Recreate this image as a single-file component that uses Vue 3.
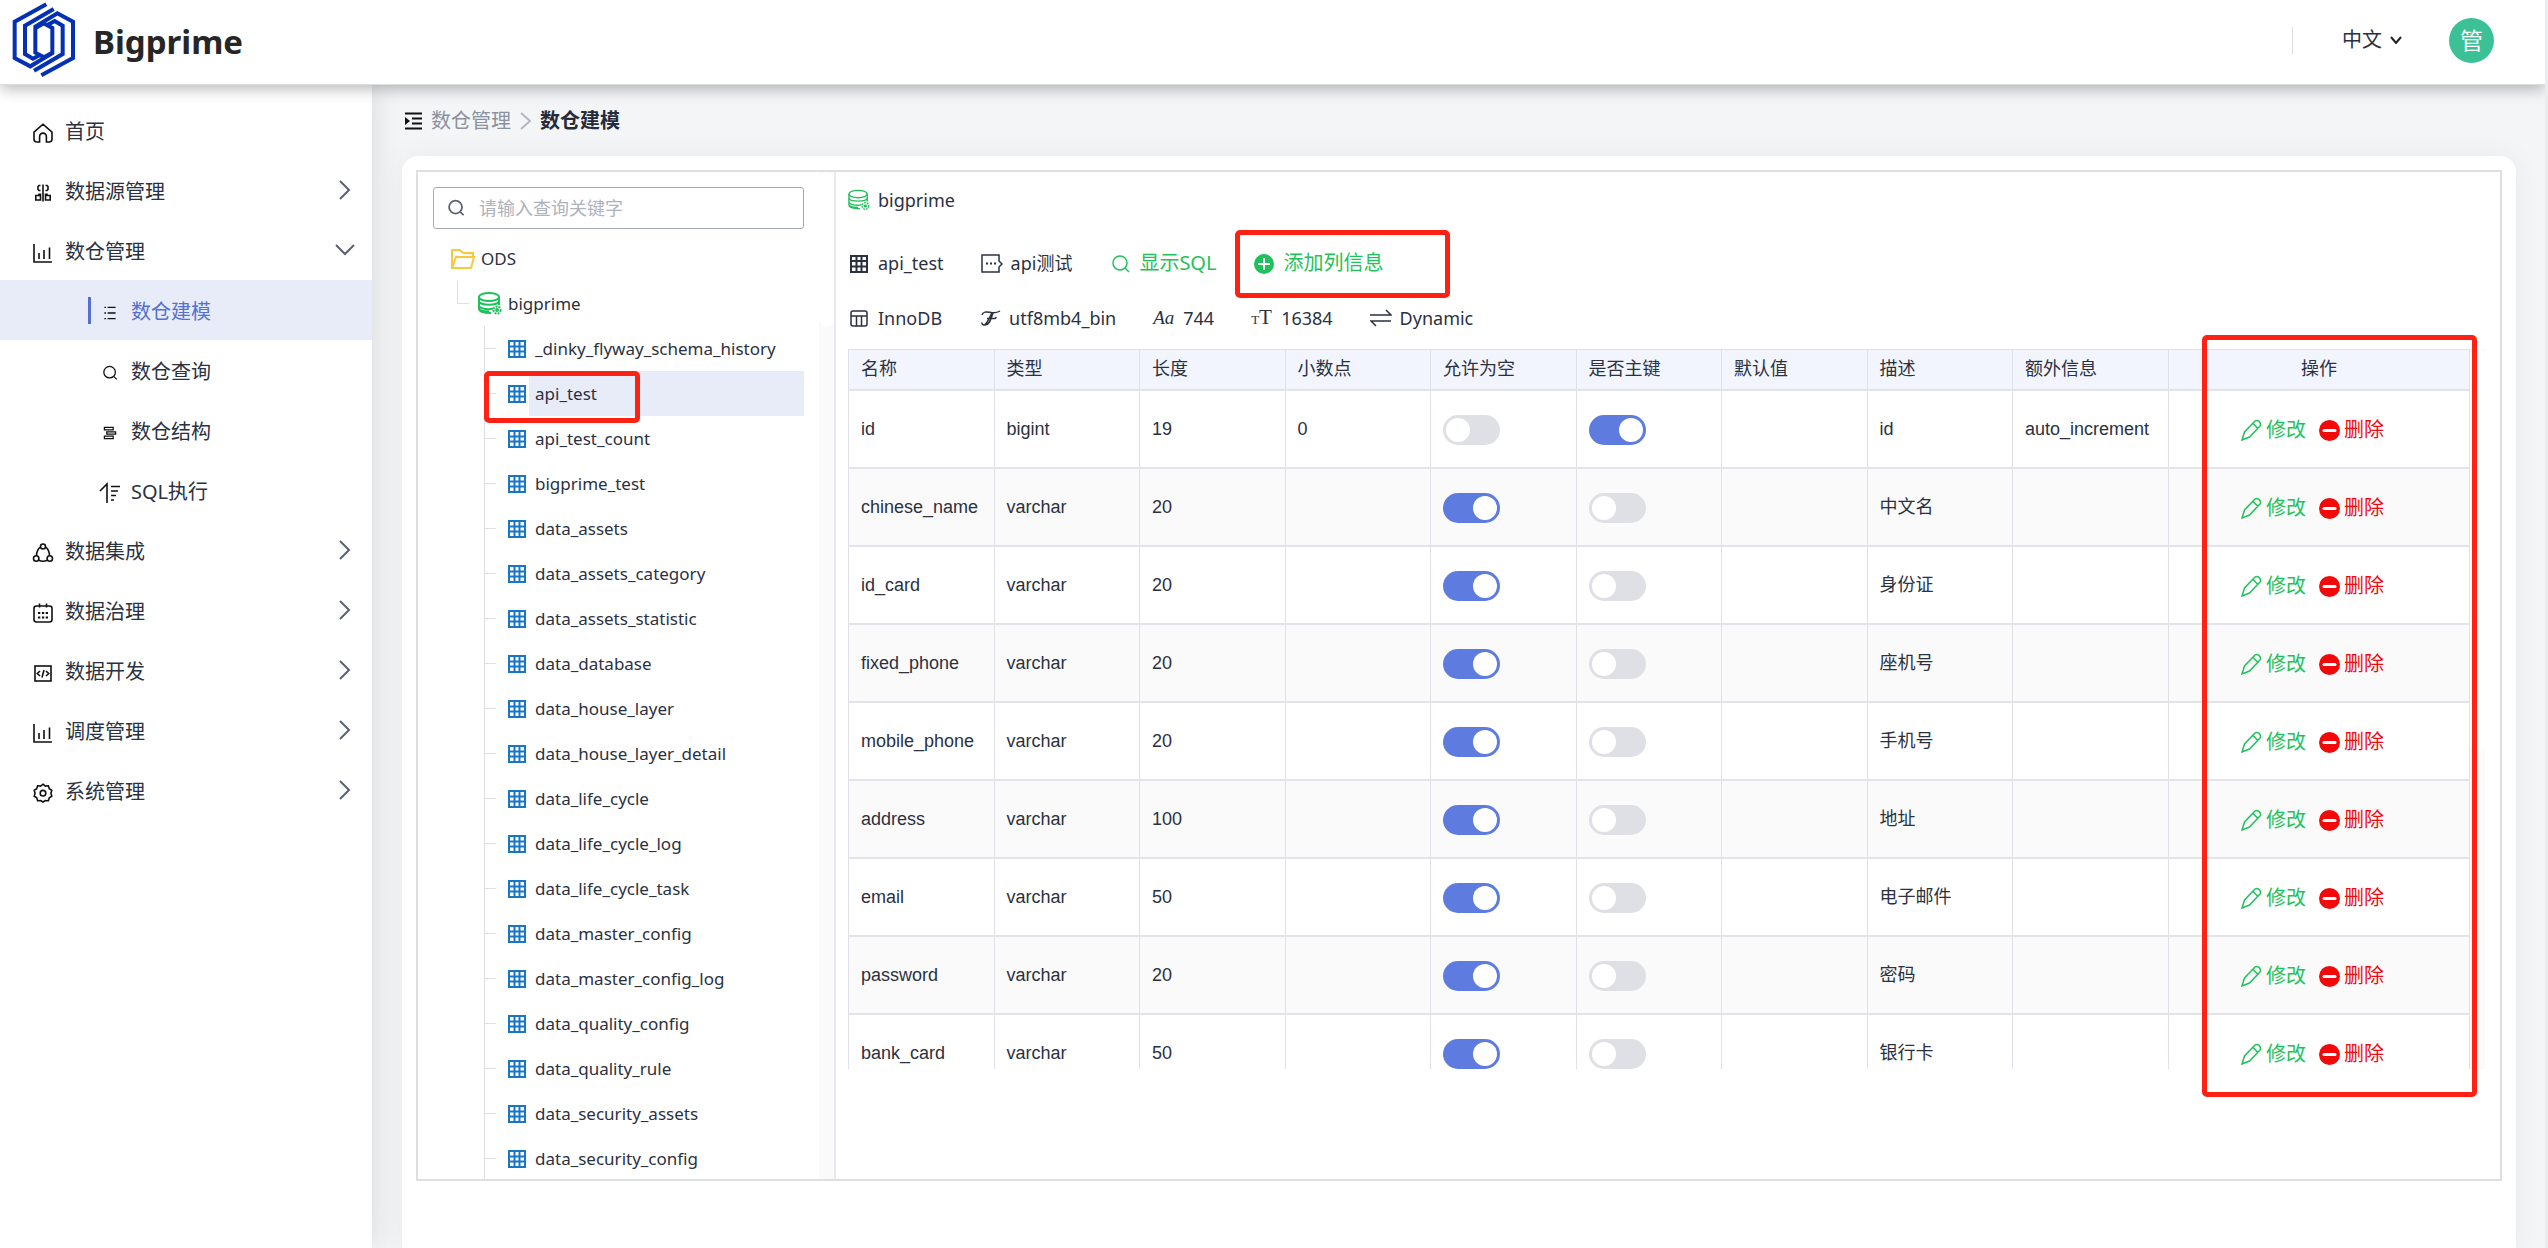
<script setup>
import { ref, reactive } from 'vue'

const keyword = ref('')

const menu = [
  { label: '首页', icon: 'home' },
  { label: '数据源管理', icon: 'source', arrow: 'right' },
  {
    label: '数仓管理', icon: 'chart', arrow: 'down',
    children: [
      { label: '数仓建模', icon: 'list', active: true },
      { label: '数仓查询', icon: 'search' },
      { label: '数仓结构', icon: 'layers' },
      { label: 'SQL执行', icon: 'sort' },
    ],
  },
  { label: '数据集成', icon: 'share', arrow: 'right' },
  { label: '数据治理', icon: 'calendar', arrow: 'right' },
  { label: '数据开发', icon: 'code', arrow: 'right' },
  { label: '调度管理', icon: 'chart', arrow: 'right' },
  { label: '系统管理', icon: 'gear', arrow: 'right' },
]

const tables = [
  '_dinky_flyway_schema_history', 'api_test', 'api_test_count', 'bigprime_test',
  'data_assets', 'data_assets_category', 'data_assets_statistic', 'data_database',
  'data_house_layer', 'data_house_layer_detail', 'data_life_cycle', 'data_life_cycle_log',
  'data_life_cycle_task', 'data_master_config', 'data_master_config_log',
  'data_quality_config', 'data_quality_rule', 'data_security_assets', 'data_security_config',
]
const current = 'api_test'

const heads = ['名称', '类型', '长度', '小数点', '允许为空', '是否主键', '默认值', '描述', '额外信息']

const columns = reactive([
  { name: 'id', type: 'bigint', len: 19, dec: '0', nullable: false, pk: true, desc: 'id', extra: 'auto_increment' },
  { name: 'chinese_name', type: 'varchar', len: 20, nullable: true, pk: false, desc: '中文名' },
  { name: 'id_card', type: 'varchar', len: 20, nullable: true, pk: false, desc: '身份证' },
  { name: 'fixed_phone', type: 'varchar', len: 20, nullable: true, pk: false, desc: '座机号' },
  { name: 'mobile_phone', type: 'varchar', len: 20, nullable: true, pk: false, desc: '手机号' },
  { name: 'address', type: 'varchar', len: 100, nullable: true, pk: false, desc: '地址' },
  { name: 'email', type: 'varchar', len: 50, nullable: true, pk: false, desc: '电子邮件' },
  { name: 'password', type: 'varchar', len: 20, nullable: true, pk: false, desc: '密码' },
  { name: 'bank_card', type: 'varchar', len: 50, nullable: true, pk: false, desc: '银行卡' },
])

const icons = {
  home: '<path d="M1 9.200 10 1.200l9 8V16a3 3 0 0 1-3 3h-2.600v-5.500a3.400 3.400 0 0 0-6.800 0V19H4a3 3 0 0 1-3-3z"/>',
  source: '<path d="M10 1.500v17M7.500 2.500H6L5 3.500v3l1 1h1.500M12.500 2.500H14l1 1v3l-1 1h-1.500M7.500 10.500V17H2.800v-4.500H6v-2M12.500 10.500V17h4.700v-4.500H14v-2"/>',
  chart: '<path d="M1 1v18h18M6 10v6M11 7v9M16.500 4.500V16"/>',
  list: '<path d="M3 3h2M7 3h10M3 10h2M7 10h10M3 17h2M7 17h10"/>',
  search: '<circle cx="9.500" cy="9" r="7.200"/><path d="M14.800 14.500 18.500 18"/>',
  layers: '<path d="M3 3h11v3H3zM6 8.500h11v3H6zM3 14h11v3H3z"/>',
  sort: '<path d="M0 8 7 1v19M11 3.500h9M11 8h7M11 12.500h5M11 17h3"/>',
  share: '<circle cx="10" cy="3.500" r="2.500"/><circle cx="3.200" cy="15.500" r="2.700"/><circle cx="16.800" cy="15.500" r="2.700"/><path d="M7.500 4.200C4.800 6 3.600 9 3.500 12.700M12.500 4.200c2.700 1.800 3.900 4.800 4 8.500M5.800 17.200c2.800 1.400 5.600 1.400 8.400 0"/>',
  calendar: '<rect x="1" y="3" width="18" height="16" rx="2.500"/><path d="M6.500.5v4M13.500.5v4"/><path d="M5 10h2.300M8.900 10h2.300M12.700 10H15M5 14.500h2.300M8.900 14.500h2.300M12.700 14.500H15" stroke-width="2.200"/>',
  code: '<rect x="2" y="3" width="16" height="15"/><path d="M7 8l-2.700 2.500L7 13M13 8l2.700 2.500L13 13M11 7l-2 7.500"/>',
  gear: '<path d="M10 1.200l2.400 1.900 3-.3.9 2.900 2.500 1.700-.9 2.800.9 2.900-2.500 1.700-.9 2.900-3-.2L10 19l-2.400-1.500-3 .2-.9-2.900-2.500-1.700.9-2.900-.9-2.800 2.500-1.700.9-2.900 3 .3z"/><circle cx="10" cy="10.200" r="2.800"/>',
}
</script>

<template>
  <div class="page">
    <header class="topbar">
      <a href="#" class="brand">
        <svg class="logo" viewBox="0 0 240 240" fill="none" stroke="#0431b4" stroke-width="12">
          <path d="M127 13 32 65v109l47 25 66-40V84l-26-14-24 14" />
          <path d="M112 226l95-52V65l-47-25-66 40v78l26 14 25-14" />
          <path d="M149 27 63 77v85l24 14 22-12" />
          <path d="M90 212l86-50V77l-24-14-22 12" />
        </svg>
        <span>Bigprime</span>
      </a>
      <div class="tools">
        <button type="button" class="lang">中文
          <svg width="12" height="8" viewBox="0 0 12 8" fill="none" stroke="#222" stroke-width="2"><path d="M1 1l5 6 5-6" /></svg>
        </button>
        <span class="avatar">管</span>
      </div>
    </header>

    <div class="body">
      <nav class="sidebar">
        <template v-for="item in menu" :key="item.label">
          <a href="#" class="nav-item">
            <svg class="nav-icon" viewBox="0 0 20 20" v-html="icons[item.icon]" />
            <span>{{ item.label }}</span>
            <svg v-if="item.arrow" class="nav-arrow" :class="item.arrow" viewBox="0 0 20 20"><path d="M5 1l9 9-9 9" /></svg>
          </a>
          <a v-for="sub in item.children" :key="sub.label" href="#" class="nav-item sub" :class="{ active: sub.active }">
            <i class="bar"></i>
            <svg class="nav-icon" :class="{ tall: sub.icon === 'sort' }" viewBox="0 0 20 20" v-html="icons[sub.icon]" />
            <span>{{ sub.label }}</span>
          </a>
        </template>
      </nav>

      <main class="main">
        <div class="crumbs">
          <svg width="17" height="18" viewBox="0 0 17 18" fill="none" stroke="#111" stroke-width="2">
            <path d="M0 1.500h17M7 6.500h10M7 11.500h10M0 16.500h17" /><path d="M0 5l5 4-5 4z" fill="#111" stroke="none" />
          </svg>
          <a href="#">数仓管理</a>
          <svg width="11" height="18" viewBox="0 0 11 18" fill="none" stroke="#b4b8c0" stroke-width="2"><path d="M1 1l9 8-9 8" /></svg>
          <strong>数仓建模</strong>
        </div>

        <section class="card">
          <div class="split">
            <aside class="tree-pane">
              <div class="tree-content">
                <label class="search">
                  <svg width="18" height="18" viewBox="0 0 20 20" fill="none" stroke="#5d6475" stroke-width="2" v-html="icons.search" />
                  <input v-model="keyword" type="text" placeholder="请输入查询关键字" aria-label="请输入查询关键字" />
                </label>
                <ul class="tree">
                  <li class="node root">
                    <svg width="24" height="20" viewBox="0 0 24 20" fill="none" stroke="#fbc73c" stroke-width="2">
                      <path d="M1 19V1h8l3 3h10v4M1 19l4-11h18l-3 11z" />
                    </svg>ODS
                  </li>
                  <li class="node db">
                    <svg width="24" height="23" viewBox="0 0 24 23" fill="none" stroke="#1fc25a" stroke-width="2">
                      <ellipse cx="11" cy="5" rx="10" ry="4" /><path d="M1 5v12c0 2.500 5 4 12 4M21 5v8M1 9c0 5 20 5 20 0M1 13c0 4 9 5 14 3.500M1 17c1 2 5 2.500 10 2.500" />
                      <circle cx="19" cy="18" r="3.600" fill="#fff" stroke-dasharray="2 1" /><circle cx="19" cy="18" r="1" />
                    </svg>bigprime
                  </li>
                  <li v-for="t in tables" :key="t" class="node leaf">
                    <svg width="18" height="18" viewBox="0 0 18 18" fill="none" stroke="#1876c6" stroke-width="2">
                      <path d="M1 1h16v16H1zM6.500 1v16M11.500 1v16M1 6.500h16M1 11.500h16" />
                    </svg>
                    <span class="leaf-name" :class="{ on: t === current }">{{ t }}</span>
                    <i v-if="t === current" class="mark mark-node"></i>
                  </li>
                </ul>
              </div>
              <div class="track"><div class="thumb short"></div></div>
            </aside>

            <div class="detail">
              <div class="line first">
                <span class="info schema">
                  <svg viewBox="0 0 24 23">
                    <ellipse cx="11" cy="5" rx="10" ry="4" /><path d="M1 5v12c0 2.500 5 4 12 4M21 5v8M1 9c0 5 20 5 20 0M1 13c0 4 9 5 14 3.500M1 17c1 2 5 2.500 10 2.500" />
                    <circle cx="19" cy="18" r="3.600" fill="#fff" stroke-dasharray="2 1" /><circle cx="19" cy="18" r="1" />
                  </svg>bigprime
                </span>
              </div>
              <div class="line second">
                <span class="info">
                  <svg viewBox="0 0 22 22"><path d="M3 4h16v16H3zM3 9h16M3 14.500h16M8.500 4v16M13.500 4v16" stroke-width="2" /></svg>api_test
                </span>
                <span class="info">
                  <svg viewBox="0 0 22 22"><path d="M18 9V3H1v17h17v-5l3-3z" /><path d="M5 11.500h2M9 11.500h2M13 11.500h2" stroke-width="2" /></svg>api测试
                </span>
                <button type="button" class="info green">
                  <svg viewBox="0 0 22 22"><circle cx="11" cy="11" r="7" /><path d="M16 16l4 4" /></svg>显示SQL
                </button>
                <button type="button" class="info green">
                  <svg viewBox="0 0 22 22"><circle cx="11" cy="12" r="10" fill="#1fc25a" stroke="none" /><path d="M5 12h12M11 6v12" stroke="#fff" stroke-width="2" /></svg>添加列信息
                  <i class="mark mark-add"></i>
                </button>
              </div>
              <div class="line third">
                <span class="info">
                  <svg viewBox="0 0 22 22"><rect x="3" y="4" width="16" height="15" rx="2" /><path d="M3 9h16M8.500 9v10M13.500 9v10" /></svg>InnoDB
                </span>
                <span class="info">
                  <svg viewBox="0 0 22 22"><path d="M3 8c1-4 5-3 9-2.500s6 .5 9-1.500M14 6c-2 5-3 12-8 12-2 0-3.500-1-3-2.500M13 5.500C11 10 9 15 6 17.500M8 11.500h8l1.500-1.500" /></svg>utf8mb4_bin
                </span>
                <span class="info">
                  <em class="glyph slant">Aa</em>744
                </span>
                <span class="info">
                  <em class="glyph"><small>T</small>T</em>16384
                </span>
                <span class="info">
                  <svg viewBox="0 0 22 22"><path d="M0 8h21l-5-5M21 14H1l5 5" /></svg>Dynamic
                </span>
              </div>

              <div class="grid-wrap">
                <div class="grid-scroll">
                  <table>
                    <colgroup>
                      <col v-for="n in 8" :key="n" />
                      <col class="c-extra" /><col class="c-ops" />
                    </colgroup>
                    <thead>
                      <tr><th v-for="h in heads" :key="h">{{ h }}</th><th class="ops-head">操作</th></tr>
                    </thead>
                    <tbody>
                      <tr v-for="c in columns" :key="c.name">
                        <td>{{ c.name }}</td>
                        <td>{{ c.type }}</td>
                        <td>{{ c.len }}</td>
                        <td>{{ c.dec }}</td>
                        <td><input v-model="c.nullable" type="checkbox" class="switch" :aria-label="c.name + ' 允许为空'" /></td>
                        <td><input v-model="c.pk" type="checkbox" class="switch" :aria-label="c.name + ' 是否主键'" /></td>
                        <td></td>
                        <td>{{ c.desc }}</td>
                        <td>{{ c.extra }}</td>
                        <td class="ops-cell">
                          <div class="ops">
                            <button type="button" class="edit">
                              <svg width="21" height="22" viewBox="0 0 21 22" fill="none" stroke="#1fc25a" stroke-width="1.500"><path d="M1 21l2.500-8L14 2c2-1.500 6 .5 5.500 4.500L8.500 18zM12 4.500l5 5" /></svg>修改
                            </button>
                            <button type="button" class="del">
                              <svg width="21" height="21" viewBox="0 0 21 21"><circle cx="10.500" cy="10.500" r="10.500" fill="#f20a0a" /><path d="M5 10.500h11" stroke="#fff" stroke-width="3" stroke-linecap="round" /></svg>删除
                            </button>
                          </div>
                        </td>
                      </tr>
                    </tbody>
                  </table>
                </div>
                <div class="track"><div class="thumb long"></div></div>
                <i class="mark mark-ops"></i>
              </div>
            </div>
          </div>
        </section>
      </main>
    </div>
  </div>
</template>

<style>
body { margin: 0; overflow: hidden; }
</style>

<style scoped>
.page {
  --cjk: "Noto Sans CJK SC";
  box-sizing: border-box;
  height: 100vh;
  display: flex;
  flex-direction: column;
  overflow: hidden;
  border-right: 3px solid #ebecee;
  background: #f4f5f7;
  color: #2b3140;
  font: 20px/30px "Noto Sans", var(--cjk), sans-serif;
}
.page *, .page *::before, .page *::after { box-sizing: border-box; }
a { color: inherit; text-decoration: none; }
button { padding: 0; border: 0; background: none; color: inherit; font: inherit; cursor: pointer; }
svg { flex: none; }

.topbar {
  position: relative;
  z-index: 2;
  flex: none;
  height: 85px;
  display: flex;
  justify-content: space-between;
  align-items: flex-start;
  padding: 0 51px 0 4px;
  background: #fff;
  border-bottom: 1px solid #dcdedd;
  box-shadow: 0 4px 14px rgba(0, 0, 0, .28);
}
.brand { display: flex; gap: 9px; font-size: 33px; font-weight: 700; color: #262626; line-height: 84px; }
.logo { width: 80px; height: 80px; }
.tools { display: flex; align-items: center; height: 80px; }
.lang { display: flex; align-items: center; gap: 8px; height: 27px; margin-right: 47px; padding-left: 49px; border-left: 1px solid #dcdde0; }
.avatar { width: 45px; height: 45px; border-radius: 50%; background: #3cc196; color: #fff; font-size: 23px; line-height: 45px; text-align: center; }

.body { flex: 1; min-height: 0; display: flex; }
.sidebar { position: relative; flex: none; width: 372px; padding-top: 15px; background: #fff; box-shadow: 0 0 30px rgba(0, 0, 0, .12); }
.nav-item { display: flex; align-items: center; height: 60px; padding: 4px 17px 0 33px; }
.nav-icon { width: 20px; height: 20px; margin: 2px 12px 0 0; overflow: visible; fill: none; stroke: #111; stroke-width: 1.6; }
.nav-arrow { width: 20px; height: 20px; margin: -4px 0 0 auto; fill: none; stroke: #5a6172; stroke-width: 2; }
.nav-arrow.down { transform: rotate(90deg); }
.nav-item.sub { padding-left: 88px; }
.sub .bar { width: 3px; height: 27px; margin: -4px 9px 0 0; }
.sub .nav-icon { height: 16px; margin-right: 11px; }
.sub .tall { height: 20px; }
.active { background: #e8ecf8; color: #5470d0; }
.active .bar { background: #5470d0; }

.main { flex: 1; min-width: 0; padding: 0 29px 0 30px; overflow: hidden; }
.crumbs { display: flex; align-items: center; gap: 9px; height: 71px; padding: 1px 0 0 3px; color: #8b919d; }
.crumbs strong { color: #252b3a; }

.card { height: calc(100vh + -144px); padding: 14px; background: #fff; border-radius: 16px; box-shadow: 0 0 30px rgba(0, 0, 0, .05); }
.split { display: flex; height: calc(100vh - 237px); border: 2px solid #dedfe1; }

.tree-pane { flex: none; width: 418px; display: flex; border-right: 2px solid #e8e9ef; }
.tree-content { flex: 1; min-width: 0; padding: 15px 15px 0; overflow: hidden; }
.search { display: flex; align-items: center; gap: 14px; height: 42px; padding: 0 13px; border: 1px solid #a6aab5; border-radius: 3px; }
.search input { flex: 1; min-width: 0; padding: 0; border: 0; outline: 0; background: none; color: #2b3140; font: 18px/24px "Noto Sans", var(--cjk), sans-serif; }
.search input::placeholder { color: #aeb2bc; }
.tree { margin: 7px 0 0; padding: 0; list-style: none; font-size: 17px; }
.node { position: relative; display: flex; align-items: center; height: 45px; }
.root { gap: 6px; padding-left: 18px; }
.db { gap: 6px; padding-left: 45px; }
.leaf { padding-left: 75px; }
.leaf-name { flex: 1; height: 45px; margin-left: 3px; padding-left: 6px; line-height: 45px; }
.leaf-name.on { background: #e8ecf8; }
.db::before { content: ""; position: absolute; left: 24px; top: 0; width: 12px; height: 23px; border: solid #dddfe5; border-width: 0 0 1px 1px; }
.leaf::before { content: ""; position: absolute; left: 51px; top: 0; height: 45px; border-left: 1px solid #dddfe5; }
.leaf::after { content: ""; position: absolute; left: 51px; top: 22px; width: 12px; border-top: 1px solid #dddfe5; }

.track { flex: none; width: 15px; background: #fafafa; }
.thumb { border-radius: 8px; background: #fff; }
.short { height: 155px; }
.long { height: 56%; }

.mark { position: absolute; z-index: 1; border: 5px solid #ff2114; border-radius: 5px; pointer-events: none; }
.mark-node { left: 51px; top: 0; width: 156px; height: 52px; }
.mark-add { left: -18px; top: -18px; width: 215px; height: 68px; }
.mark-ops { right: 8px; top: -14px; width: 275px; height: 762px; }

.detail { flex: 1; min-width: 0; display: flex; flex-direction: column; padding: 13px 15px 110px 12px; font-size: 18px; }
.line { display: flex; gap: 37px; }
.second { margin-top: 33px; }
.third { margin: 25px 0 16px; }
.info { position: relative; display: flex; align-items: center; gap: 8px; height: 30px; white-space: nowrap; }
.info > svg { width: 22px; height: 22px; fill: none; stroke: #2b3140; stroke-width: 1.5; }
.schema > svg { stroke: #1fc25a; }
.green { color: #1fc25a; font-size: 20px; }
.green > svg { stroke: #1fc25a; }
.glyph { width: 22px; font: normal 21px/30px "Liberation Serif", serif; }
.glyph.slant { font-size: 19px; font-style: italic; }
.glyph small { font-size: 13px; }

.grid-wrap { position: relative; flex: 1; min-height: 0; display: flex; }
.grid-scroll { flex: 1; min-width: 0; overflow: hidden; }
table { width: 100%; table-layout: fixed; border-collapse: separate; border-spacing: 0; border-left: 1px solid #dfe1e7; font: 18px/27px "Liberation Sans", var(--cjk), sans-serif; }
.c-extra { width: 156px; }
.c-ops { width: 301px; }
th, td { padding: 0 12px; border-right: 1px solid #dfe1e7; border-bottom: 2px solid #e3e4e9; text-align: left; white-space: nowrap; }
th { height: 42px; background: #f2f5fd; border-top: 1px solid #dfe1e7; font-weight: 400; }
th.ops-head { text-align: center; }
td { height: 78px; }
tbody tr:nth-child(even) { background: #fafafa; }
.ops-cell { padding-left: 72px; }
.ops { display: flex; gap: 13px; font-size: 20px; line-height: 30px; padding-top: 2px; }
.edit, .del { display: flex; align-items: center; gap: 4px; }
.edit { color: #1fc25a; }
.del { color: #f20a0a; }
.switch { appearance: none; display: block; width: 57px; height: 30px; margin: 1px 0 0; padding: 3px; border-radius: 15px; background: #dfe0e6; cursor: pointer; }
.switch::before { content: ""; display: block; width: 24px; height: 24px; border-radius: 50%; background: #fff; }
.switch:checked { background: #5e7ce0; }
.switch:checked::before { margin-left: 27px; }
</style>
